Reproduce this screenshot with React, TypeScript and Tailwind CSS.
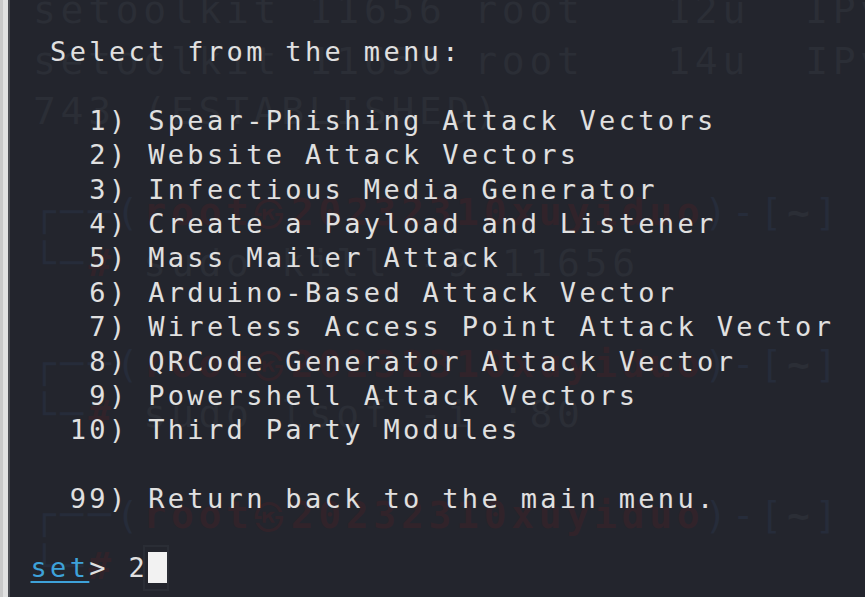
import React from 'react';

const menuLines = [
  ' Select from the menu:',
  '',
  '   1) Spear-Phishing Attack Vectors',
  '   2) Website Attack Vectors',
  '   3) Infectious Media Generator',
  '   4) Create a Payload and Listener',
  '   5) Mass Mailer Attack',
  '   6) Arduino-Based Attack Vector',
  '   7) Wireless Access Point Attack Vector',
  '   8) QRCode Generator Attack Vector',
  '   9) Powershell Attack Vectors',
  '  10) Third Party Modules',
  '',
  '  99) Return back to the main menu.',
  '',
];

// faint prompt from the window behind (terminal transparency)
const GhostPrompt: React.FC = () => (
  <div className="h-[50.5px]">
    <span className="text-[#262c3a]">┌──(</span>
    <span className="text-[#31232a] font-bold">root</span>
    <span className="inline-block w-[37px] text-[#31232a] text-[30px] tracking-normal font-['Noto_Sans_CJK_SC',sans-serif]">㉿</span>
    <span className="text-[#31232a] font-bold">20232310xuyiduo</span>
    <span className="text-[#262c3a]">)-[</span>
    <span className="text-[#2b2e36] font-bold">~</span>
    <span className="text-[#262c3a]">]</span>
  </div>
);

const GhostCmd: React.FC<{ cmd: string; cursor?: boolean }> = ({ cmd, cursor }) => (
  <div className="h-[50.5px] flex items-start">
    <span className="text-[#262c3a]">└─</span>
    <span className="text-[#31232a] font-bold">#</span>
    <span className="text-[#2b2e36]"> {cmd}</span>
    {cursor && <span className="mt-[4px] inline-block w-[26px] h-[46px] border-2 border-[#2a2d35]" />}
  </div>
);

const Ghost: React.FC = () => (
  <div className="absolute left-[23px] top-[-15px] font-['DejaVu_Sans_Mono','Liberation_Mono',monospace] text-[38px] leading-[50.5px] tracking-[4.7px] whitespace-pre text-[#2b2e36] pointer-events-none">
    <div className="h-[50.5px]">setoolkit 11656 root   12u  IPv4</div>
    <div className="h-[50.5px]">setoolkit 11656 root   14u  IPv4</div>
    <div className="h-[50.5px]">743 (ESTABLISHED)</div>
    <div className="h-[50.5px]" />
    <GhostPrompt />
    <GhostCmd cmd="sudo kill -9 11656" />
    <div className="h-[50.5px]" />
    <GhostPrompt />
    <GhostCmd cmd="sudo lsof -i :80" />
    <div className="h-[50.5px]" />
    <GhostPrompt />
    <GhostCmd cmd="" cursor />
  </div>
);

export default function App() {
  return (
    <div className="w-[865px] h-[597px] flex overflow-hidden bg-[#23252d]">
      <div className="flex shrink-0">
        <div className="w-[3px] bg-[#c9c9c9]" />
        <div className="w-[5px] bg-[#e1e1e1]" />
        <div className="w-[2px] bg-[#4a4c52]" />
      </div>
      <div className="relative flex-1 pl-[20.5px] pt-[35px]">
        <Ghost />
        <div className="relative font-['DejaVu_Sans_Mono','Liberation_Mono',monospace] text-[27px] leading-[34.4px] tracking-[3.35px] whitespace-pre text-[#e0e0e0]">
          {menuLines.map((line, i) => (
            <div key={i} className="h-[34.4px]">{line}</div>
          ))}
          <div className="h-[34.4px] flex items-start">
            <span className="text-[#3ea2d9] underline underline-offset-[4px] decoration-[2px]">set</span>
            <span>&gt; 2</span>
            <span className="mt-[1px] inline-block w-[19px] h-[31px] bg-[#f2f2f2]" />
          </div>
        </div>
      </div>
    </div>
  );
}
